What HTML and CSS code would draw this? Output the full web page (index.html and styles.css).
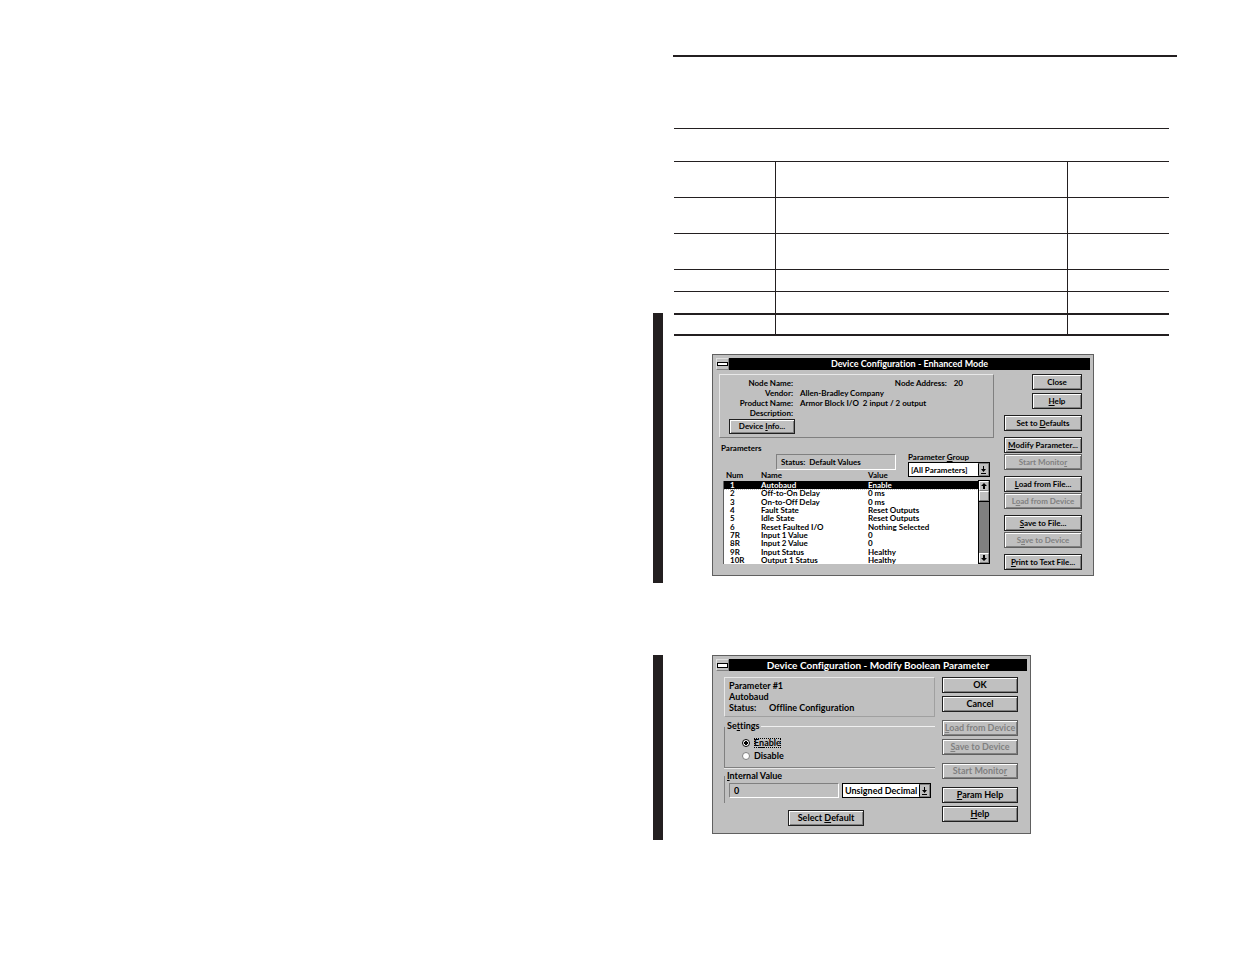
FILE: index.html
```html
<!DOCTYPE html>
<html lang="en">
<head>
  <meta charset="UTF-8" />
  <meta name="viewport" content="width=device-width, initial-scale=1" />
  <title>Device Configuration</title>
  <link rel="stylesheet" href="styles.css">
</head>
<body>
  <div class="spread">
    <div class="page-left"></div>

    <main class="page-right">
      <hr class="page-rule" />

      <table class="blank-table">
        <colgroup>
          <col class="col-first" />
          <col />
          <col class="col-last" />
        </colgroup>
        <tbody>
          <tr class="head"><td colspan="3"></td></tr>
          <tr class="tall"><td></td><td></td><td></td></tr>
          <tr class="tall"><td></td><td></td><td></td></tr>
          <tr class="tall"><td></td><td></td><td></td></tr>
          <tr><td></td><td></td><td></td></tr>
          <tr><td></td><td></td><td></td></tr>
          <tr class="last"><td></td><td></td><td></td></tr>
        </tbody>
      </table>

      <section class="change change-config">
        <div class="dialog dialog-config">
          <header class="titlebar">
            <button class="sysmenu" type="button" aria-label="System menu"></button>
            <h2>Device Configuration - Enhanced Mode</h2>
          </header>
          <div class="dialog-body">
            <div class="config-main">
              <div class="info">
                <dl>
                  <dt>Node Name:</dt><dd></dd>
                  <dt>Vendor:</dt><dd>Allen-Bradley Company</dd>
                  <dt>Product Name:</dt><dd>Armor Block I/O&nbsp; 2 input / 2 output</dd>
                  <dt>Description:</dt><dd></dd>
                </dl>
                <p class="address">Node Address: <span>20</span></p>
                <button class="btn" type="button">Device <u>I</u>nfo...</button>
              </div>

              <h3>Parameters</h3>
              <div class="filter">
                <p class="status">Status:&nbsp; Default Values</p>
                <div class="group">
                  <label for="group">Parameter <u>G</u>roup</label>
                  <span class="combo">
                    <select id="group"><option>[All Parameters]</option></select>
                    <svg class="drop" viewBox="0 0 9 11"><path d="M4 2h1v3h2L4.500 8 2 5h2zM2 9h5v1H2z" /></svg>
                  </span>
                </div>
              </div>

              <div class="list">
                <table class="params">
                  <thead>
                    <tr><th class="num">Num</th><th class="name">Name</th><th>Value</th></tr>
                  </thead>
                  <tbody>
                    <tr class="selected"><td>1</td><td>Autobaud</td><td>Enable</td></tr>
                    <tr><td>2</td><td>Off-to-On Delay</td><td>0 ms</td></tr>
                    <tr><td>3</td><td>On-to-Off Delay</td><td>0 ms</td></tr>
                    <tr><td>4</td><td>Fault State</td><td>Reset Outputs</td></tr>
                    <tr><td>5</td><td>Idle State</td><td>Reset Outputs</td></tr>
                    <tr><td>6</td><td>Reset Faulted I/O</td><td>Nothing Selected</td></tr>
                    <tr><td>7R</td><td>Input 1 Value</td><td>0</td></tr>
                    <tr><td>8R</td><td>Input 2 Value</td><td>0</td></tr>
                    <tr><td>9R</td><td>Input Status</td><td>Healthy</td></tr>
                    <tr><td>10R</td><td>Output 1 Status</td><td>Healthy</td></tr>
                  </tbody>
                </table>
                <div class="scrollbar">
                  <button type="button" aria-label="Scroll up"><svg viewBox="0 0 8 8"><path d="M4 1l3 3H5v3H3V4H1z" /></svg></button>
                  <div class="thumb"></div>
                  <div class="track"></div>
                  <button type="button" aria-label="Scroll down"><svg viewBox="0 0 8 8"><path d="M4 7l3-3H5V1H3v3H1z" /></svg></button>
                </div>
              </div>
            </div>

            <div class="buttons">
              <div class="btn-group narrow">
                <button class="btn" type="button">Close</button>
                <button class="btn" type="button"><u>H</u>elp</button>
              </div>
              <div class="btn-group">
                <button class="btn" type="button">Set to <u>D</u>efaults</button>
              </div>
              <div class="btn-group">
                <button class="btn" type="button"><u>M</u>odify Parameter...</button>
                <button class="btn" type="button" disabled>Start Monito<u>r</u></button>
              </div>
              <div class="btn-group">
                <button class="btn" type="button"><u>L</u>oad from File...</button>
                <button class="btn" type="button" disabled>L<u>o</u>ad from Device</button>
              </div>
              <div class="btn-group">
                <button class="btn" type="button"><u>S</u>ave to File...</button>
                <button class="btn" type="button" disabled>S<u>a</u>ve to Device</button>
              </div>
              <div class="btn-group">
                <button class="btn" type="button"><u>P</u>rint to Text File...</button>
              </div>
            </div>
          </div>
        </div>
      </section>

      <section class="change change-modify">
        <div class="dialog dialog-modify">
          <header class="titlebar">
            <button class="sysmenu" type="button" aria-label="System menu"></button>
            <h2>Device Configuration - Modify Boolean Parameter</h2>
          </header>
          <div class="dialog-body">
            <form class="modify-main">
              <div class="summary">
                <p>Parameter #1</p>
                <p>Autobaud</p>
                <p><span class="key">Status:</span>Offline Configuration</p>
              </div>

              <fieldset class="settings">
                <legend>Se<u>t</u>tings</legend>
                <label><input type="radio" name="setting" checked /><span class="focus">E<u>n</u>able</span></label>
                <label><input type="radio" name="setting" /><span>Disable</span></label>
              </fieldset>

              <fieldset class="internal">
                <legend><u>I</u>nternal Value</legend>
                <div class="internal-row">
                  <input type="text" value="0" aria-label="Internal Value" readonly />
                  <span class="combo">
                    <select aria-label="Number format"><option>Unsigned Decimal</option></select>
                    <svg class="drop" viewBox="0 0 9 11"><path d="M4 2h1v3h2L4.500 8 2 5h2zM2 9h5v1H2z" /></svg>
                  </span>
                </div>
              </fieldset>

              <button class="btn default-btn" type="button">Select <u>D</u>efault</button>
            </form>

            <div class="buttons">
              <div class="btn-group">
                <button class="btn" type="button">OK</button>
                <button class="btn" type="button">Cancel</button>
              </div>
              <div class="btn-group">
                <button class="btn" type="button" disabled><u>L</u>oad from Device</button>
                <button class="btn" type="button" disabled><u>S</u>ave to Device</button>
              </div>
              <div class="btn-group">
                <button class="btn" type="button" disabled>Start Monito<u>r</u></button>
              </div>
              <div class="btn-group">
                <button class="btn" type="button"><u>P</u>aram Help</button>
                <button class="btn" type="button"><u>H</u>elp</button>
              </div>
            </div>
          </div>
        </div>
      </section>
    </main>
  </div>
</body>
</html>
```
FILE: styles.css
```css
* {
  box-sizing: border-box;
}
body {
  margin: 0;
  background-color: #fff;
  color: #000;
  font-family: Lato, "Liberation Sans", sans-serif;
  font-size: 9px;
  font-weight: bold;
  font-variant-ligatures: none;
  line-height: 10px;
}
h2, h3, p, dl, dd, fieldset {
  margin: 0;
}
button, input, select {
  font: inherit;
  font-variant-ligatures: none;
  color: inherit;
  margin: 0;
  padding: 0;
  border-radius: 0;
}

/* two facing pages, the left one is blank */
.spread {
  display: grid;
  grid-template-columns: 653fr 582fr;
  min-height: 100vh;
}
.page-right {
  padding: 55px 58px 40px 0;
}
.page-rule {
  height: 2px;
  margin: 0 0 71px 20px;
  border: none;
  background-color: #231f20;
}
.blank-table {
  width: calc(100% - 29px);
  margin-left: 21px;
  border-spacing: 0;
  table-layout: fixed;
}
.blank-table .col-first {
  width: 101px;
}
.blank-table .col-last {
  width: 102px;
}
.blank-table td {
  height: 22px;
  padding: 0;
  border-top: 1px solid #231f20;
}
.blank-table td + td {
  border-left: 1px solid #231f20;
}
.blank-table .head td {
  height: 33px;
}
.blank-table .tall td {
  height: 36px;
}
.blank-table .last td {
  height: 23px;
  border-top-width: 2px;
  border-bottom: 2px solid #231f20;
}

/* change bar in the margin */
.change {
  padding-left: 49px;
  border-left: 10px solid #231f20;
}
.change-config {
  margin-top: -23px;
  padding-top: 41px;
  padding-bottom: 7px;
}
.change-modify {
  margin-top: 72px;
  padding-bottom: 6px;
}

/* dialogs */
.dialog {
  padding: 3px;
  background-color: #c0c0c0;
  border: 1px solid #606060;
}
.dialog-config {
  max-width: 382px;
  font-size: 8px;
}
.dialog-modify {
  max-width: 319px;
}
.titlebar {
  display: flex;
  height: 12px;
}
.titlebar h2 {
  flex: 1;
  background-color: #000;
  color: #fff;
  font-size: 10px;
  line-height: 12px;
  text-align: center;
}
.dialog-config h2 {
  font-size: 9px;
}
.sysmenu {
  display: flex;
  align-items: center;
  justify-content: center;
  width: 13px;
  background-color: #c0c0c0;
  border: 1px solid #e0e0e0;
  border-right-color: #808080;
  border-bottom-color: #808080;
}
.sysmenu::before {
  content: "";
  width: 9px;
  height: 3px;
  background-color: #fff;
  border: 1px solid #000;
}
.dialog-config .sysmenu::before {
  height: 2px;
}
.dialog-body {
  display: flex;
  justify-content: space-between;
}
.btn {
  height: 16px;
  padding: 0;
  background-color: #c0c0c0;
  border: 1px solid #202020;
  box-shadow: inset 1px 1px #fff, inset -1px -1px #808080;
  line-height: 12px;
  text-align: center;
  white-space: nowrap;
}
.btn:disabled {
  color: #808080;
  border-color: #606060;
}
.buttons {
  display: flex;
  flex-direction: column;
}
.btn-group {
  display: flex;
  flex-direction: column;
}

/* enhanced mode */
.dialog-config .dialog-body {
  padding: 4px 8px 2px 3px;
}
.dialog-config .buttons {
  width: 78px;
  gap: 6px;
}
.dialog-config .btn-group {
  gap: 1px;
}
.dialog-config .narrow {
  width: 50px;
  gap: 3px;
  align-self: flex-end;
}
.config-main {
  width: 275px;
}
.info {
  display: grid;
  grid-template-columns: 1fr auto;
  height: 64px;
  padding: 3px 30px 3px 9px;
  border: 1px solid #e8e8e8;
  border-right-color: #808080;
  border-bottom-color: #808080;
}
.info dl {
  display: grid;
  grid-template-columns: 64px 1fr;
  grid-auto-rows: 10px;
  column-gap: 7px;
  min-width: 0;
  white-space: nowrap;
}
.info dt {
  text-align: right;
}
.address {
  white-space: nowrap;
}
.address span {
  margin-left: 5px;
}
.info .btn {
  width: 66px;
  height: 15px;
}
.config-main h3 {
  margin: 5px 0 0 2px;
  font-size: 8px;
}
.filter {
  display: flex;
  justify-content: space-between;
  padding: 0 4px 0 57px;
}
.status {
  width: 120px;
  height: 16px;
  margin-top: 1px;
  padding: 2px 4px;
  border: 1px solid #808080;
  border-right-color: #fff;
  border-bottom-color: #fff;
}
.group {
  width: 82px;
  margin-top: -1px;
}
.group label {
  display: block;
}
.combo {
  position: relative;
  display: block;
}
.combo select {
  display: block;
  width: 100%;
  height: 15px;
  padding: 0 2px;
  appearance: none;
  background-color: #fff;
  border: 1px solid #000;
}
.drop {
  position: absolute;
  top: 1px;
  right: 1px;
  width: 11px;
  height: 13px;
  background-color: #c0c0c0;
  border: 1px solid #808080;
  border-left-color: #000;
  pointer-events: none;
}
.list {
  display: flex;
  align-items: flex-end;
  margin: -8px 4px 0;
}
.params {
  flex: 1;
  border-spacing: 0;
}
.params th {
  height: 12px;
  padding: 0 0 0 3px;
  text-align: left;
}
.params .num {
  width: 35px;
}
.params .name {
  width: 107px;
}
.params td {
  height: 8px;
  padding: 0 0 0 3px;
  background-color: #fff;
  line-height: 8px;
}
.params td:first-child {
  padding-left: 6px;
  border-left: 1px solid #606060;
}
.params tr:nth-child(3n) td {
  height: 9px;
}
.params tbody .selected td {
  background-color: #000;
  color: #fff;
}
.params .selected {
  outline: 1px dotted #c0c0c0;
}
.scrollbar {
  display: flex;
  flex-direction: column;
  width: 12px;
  height: 84px;
  border: 1px solid #000;
  background-color: #808080;
}
.scrollbar button, .thumb {
  height: 10px;
  background-color: #c0c0c0;
  border: 1px solid #fff;
  border-right-color: #808080;
  border-bottom-color: #808080;
}
.scrollbar svg {
  display: block;
  width: 8px;
  height: 8px;
}
.track {
  flex: 1;
  border-top: 1px solid #000;
}

/* modify boolean parameter */
.dialog-modify .dialog-body {
  padding: 6px 9px 4px 8px;
}
.dialog-modify .buttons {
  width: 76px;
  gap: 8px;
}
.dialog-modify .btn-group {
  gap: 3px;
}
.modify-main {
  display: flex;
  flex-direction: column;
  width: 211px;
}
.summary {
  height: 40px;
  padding: 2px 4px;
  border: 1px solid #e8e8e8;
  border-right-color: #a0a0a0;
  border-bottom-color: #a0a0a0;
  line-height: 11px;
}
.key {
  display: inline-block;
  width: 40px;
}
legend {
  padding: 0 2px;
}
.settings {
  height: 47px;
  margin-top: 4px;
  padding: 5px 0 0;
  border: 1px solid #808080;
  border-top-color: #f0f0f0;
  border-right: none;
  box-shadow: 0 1px #e8e8e8;
}
.settings label {
  display: flex;
  align-items: center;
  gap: 4px;
  height: 13px;
  margin-left: 17px;
}
.settings input {
  width: 8px;
  height: 8px;
  appearance: none;
  background-color: #fff;
  border: 1px solid #808080;
  border-radius: 50%;
}
.settings input:checked {
  border-color: #000;
  background-image: radial-gradient(circle, #000 2px, #fff 2px);
}
.focus {
  outline: 1px dotted #000;
  outline-offset: -1px;
}
.internal {
  height: 32px;
  margin-top: 3px;
  padding: 2px 4px 0 0;
  border: none;
  border-left: 1px solid #808080;
}
.internal-row {
  display: flex;
  gap: 3px;
  margin-left: 4px;
}
.internal input {
  width: 110px;
  height: 15px;
  padding: 0 4px;
  background-color: #c0c0c0;
  border: 1px solid #808080;
  border-right-color: #fff;
  border-bottom-color: #fff;
}
.internal .combo {
  flex: 1;
}
.default-btn {
  width: 76px;
  margin: 7px 0 0 64px;
}
```
